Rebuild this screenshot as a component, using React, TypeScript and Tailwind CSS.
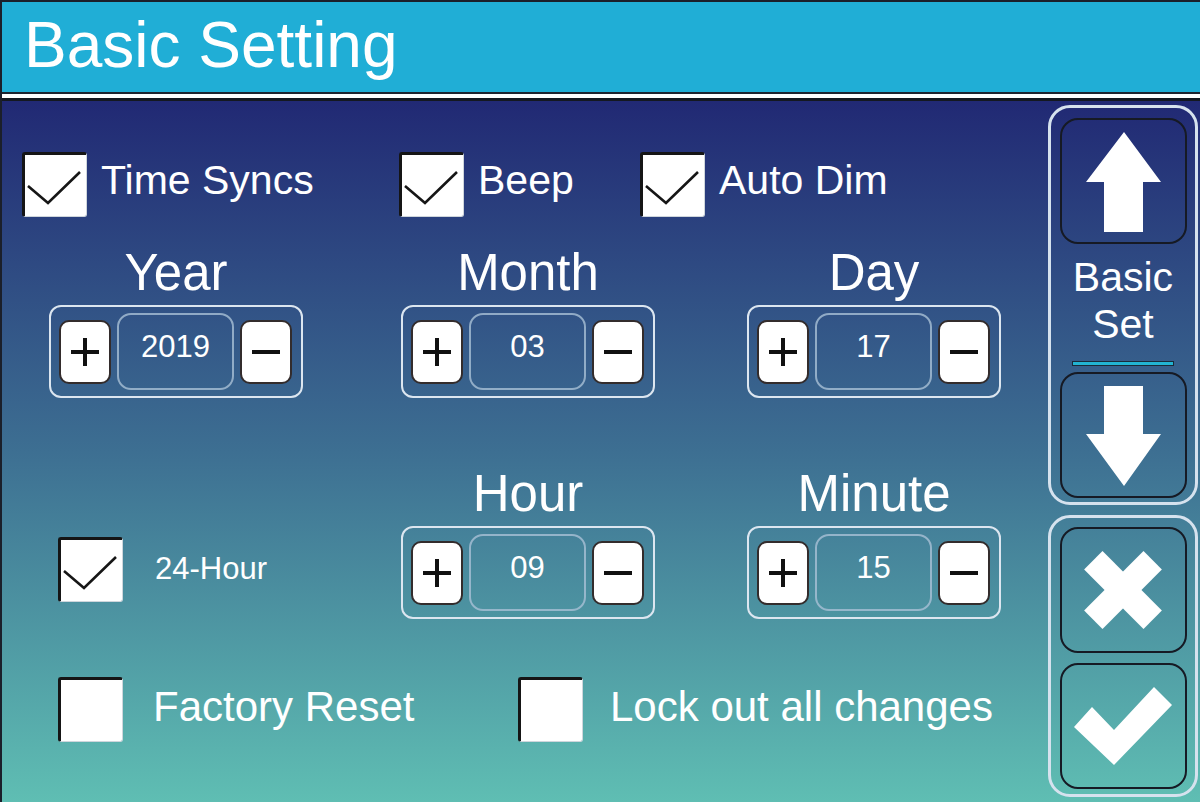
import React from 'react';

// Inverter-style "Basic Setting" screen
const FONT = "font-['Liberation_Sans',Arial,sans-serif]";

function CheckBox({ checked }: { checked: boolean }) {
  return (
    <div className="w-[65px] h-[65px] shrink-0 bg-white rounded-[3px] border-l-[3px] border-t-[3px] border-r border-b border-l-[#151515] border-t-[#151515] border-r-[#cfd6dc] border-b-[#cfd6dc]">
      {checked && (
        <svg width="65" height="65" viewBox="3 3 65 65" className="block -ml-[3px] -mt-[3px]">
          <polyline points="9,37 29,54 61,23" fill="none" stroke="#161616" strokeWidth="2.6" />
        </svg>
      )}
    </div>
  );
}

function Stepper({ value }: { value: string }) {
  return (
    <div className="w-[254px] h-[93px] rounded-[12px] border-2 border-[#dce6f0] flex items-center px-[8px] gap-[6px]">
      <button className="w-[52px] h-[64px] bg-white rounded-[10px] border-2 border-[#332c2c] flex items-center justify-center">
        <svg width="28" height="28" viewBox="0 0 28 28">
          <path d="M0 14H28M14 0V28" stroke="#111" strokeWidth="4" />
        </svg>
      </button>
      <div className="w-[117px] h-[77px] rounded-[14px] border-2 border-[#a9c0d6]/80 flex items-center justify-center pb-[10px] text-[31px] leading-none text-white">
        {value}
      </div>
      <button className="w-[52px] h-[64px] bg-white rounded-[10px] border-2 border-[#332c2c] flex items-center justify-center">
        <svg width="28" height="6" viewBox="0 0 28 6">
          <path d="M0 3H28" stroke="#111" strokeWidth="4" />
        </svg>
      </button>
    </div>
  );
}

function Field({ label, value }: { label: string; value: string }) {
  return (
    <div className="w-[254px] flex flex-col items-center">
      <div className="text-[51px] leading-none text-white h-[51px]">{label}</div>
      <div className="mt-[7px]">
        <Stepper value={value} />
      </div>
    </div>
  );
}

function PanelButton({ children }: { children: React.ReactNode }) {
  return (
    <button className="w-[127px] h-[126px] shrink-0 rounded-[18px] border-2 border-[#161a24] flex items-center justify-center">
      {children}
    </button>
  );
}

export default function App() {
  return (
    <div className={`w-[1200px] h-[802px] flex flex-col overflow-hidden border-l-2 border-t-2 border-[#1b1f2a] ${FONT}`}>
      {/* title bar */}
      <div className="h-[90px] shrink-0 bg-[#20aed6] pl-[22px] pt-[11px] text-[64px] leading-none text-white">
        Basic Setting
      </div>
      <div className="h-[2px] shrink-0 bg-[#1e2530]" />
      <div className="h-[4px] shrink-0 bg-white" />
      <div className="h-[3px] shrink-0 bg-[#141820]" />

      <div className="flex-1 flex bg-[linear-gradient(to_bottom,#212974,#3d6f92_50%,#5fbeb3)]">
        {/* settings area */}
        <div className="flex-1 flex flex-col text-white">
          <div className="pt-[51px] flex items-start">
            <div className="ml-[20px] w-[377px] flex items-start">
              <CheckBox checked />
              <span className="ml-[14px] mt-[8px] text-[41px] leading-none">Time Syncs</span>
            </div>
            <div className="w-[241px] flex items-start">
              <CheckBox checked />
              <span className="ml-[14px] mt-[8px] text-[41px] leading-none">Beep</span>
            </div>
            <div className="flex items-start">
              <CheckBox checked />
              <span className="ml-[14px] mt-[8px] text-[41px] leading-none">Auto Dim</span>
            </div>
          </div>

          <div className="mt-[30px] flex">
            <div className="ml-[47px]">
              <Field label="Year" value="2019" />
            </div>
            <div className="ml-[98px]">
              <Field label="Month" value="03" />
            </div>
            <div className="ml-[92px]">
              <Field label="Day" value="17" />
            </div>
          </div>

          <div className="mt-[70px] flex">
            <div className="ml-[47px] w-[254px] pl-[9px] pt-[69px] flex items-start">
              <CheckBox checked />
              <span className="ml-[32px] mt-[16px] text-[31px] leading-none">24-Hour</span>
            </div>
            <div className="ml-[98px]">
              <Field label="Hour" value="09" />
            </div>
            <div className="ml-[92px]">
              <Field label="Minute" value="15" />
            </div>
          </div>

          <div className="mt-[58px] flex items-start">
            <div className="ml-[56px] w-[460px] flex items-start">
              <CheckBox checked={false} />
              <span className="ml-[30px] mt-[9px] text-[42px] leading-none">Factory Reset</span>
            </div>
            <div className="flex items-start">
              <CheckBox checked={false} />
              <span className="ml-[27px] mt-[9px] text-[42px] leading-none">Lock out all changes</span>
            </div>
          </div>
        </div>

        {/* side navigation */}
        <div className="w-[150px] mr-[2px] pt-[4px] flex flex-col gap-[10px]">
          <div className="h-[400px] rounded-[22px] border-[3px] border-[#d6e2ee] flex flex-col items-center pt-[10px]">
            <PanelButton>
              <svg width="123" height="122" viewBox="2 2 123 122">
                <polygon points="64,14 101,64 83,64 83,114 44,114 44,64 26,64" fill="#fff" />
              </svg>
            </PanelButton>
            <div className="mt-[10px] text-[41px] leading-[47px] text-white text-center">
              Basic
              <br />
              Set
            </div>
            <div className="mt-[13px] w-[102px] h-[5px] bg-[#22b3d2] border border-[#1a2a3a]" />
            <div className="mt-[6px]">
              <PanelButton>
                <svg width="123" height="122" viewBox="2 2 123 122">
                  <polygon points="44,14 83,14 83,62 101,62 64,114 26,62 44,62" fill="#fff" />
                </svg>
              </PanelButton>
            </div>
          </div>

          <div className="h-[282px] rounded-[22px] border-[3px] border-[#d6e2ee] flex flex-col items-center pt-[9px] gap-[10px]">
            <PanelButton>
              <svg width="123" height="122" viewBox="2 2 123 122">
                <g transform="translate(63 63) rotate(45)">
                  <rect x="-42" y="-13" width="84" height="26" fill="#fff" />
                  <rect x="-13" y="-42" width="26" height="84" fill="#fff" />
                </g>
              </svg>
            </PanelButton>
            <PanelButton>
              <svg width="123" height="122" viewBox="2 2 123 122">
                <polygon points="14,64 32,44 54,67 94,24 112,42 54,102" fill="#fff" />
              </svg>
            </PanelButton>
          </div>
        </div>
      </div>
    </div>
  );
}
